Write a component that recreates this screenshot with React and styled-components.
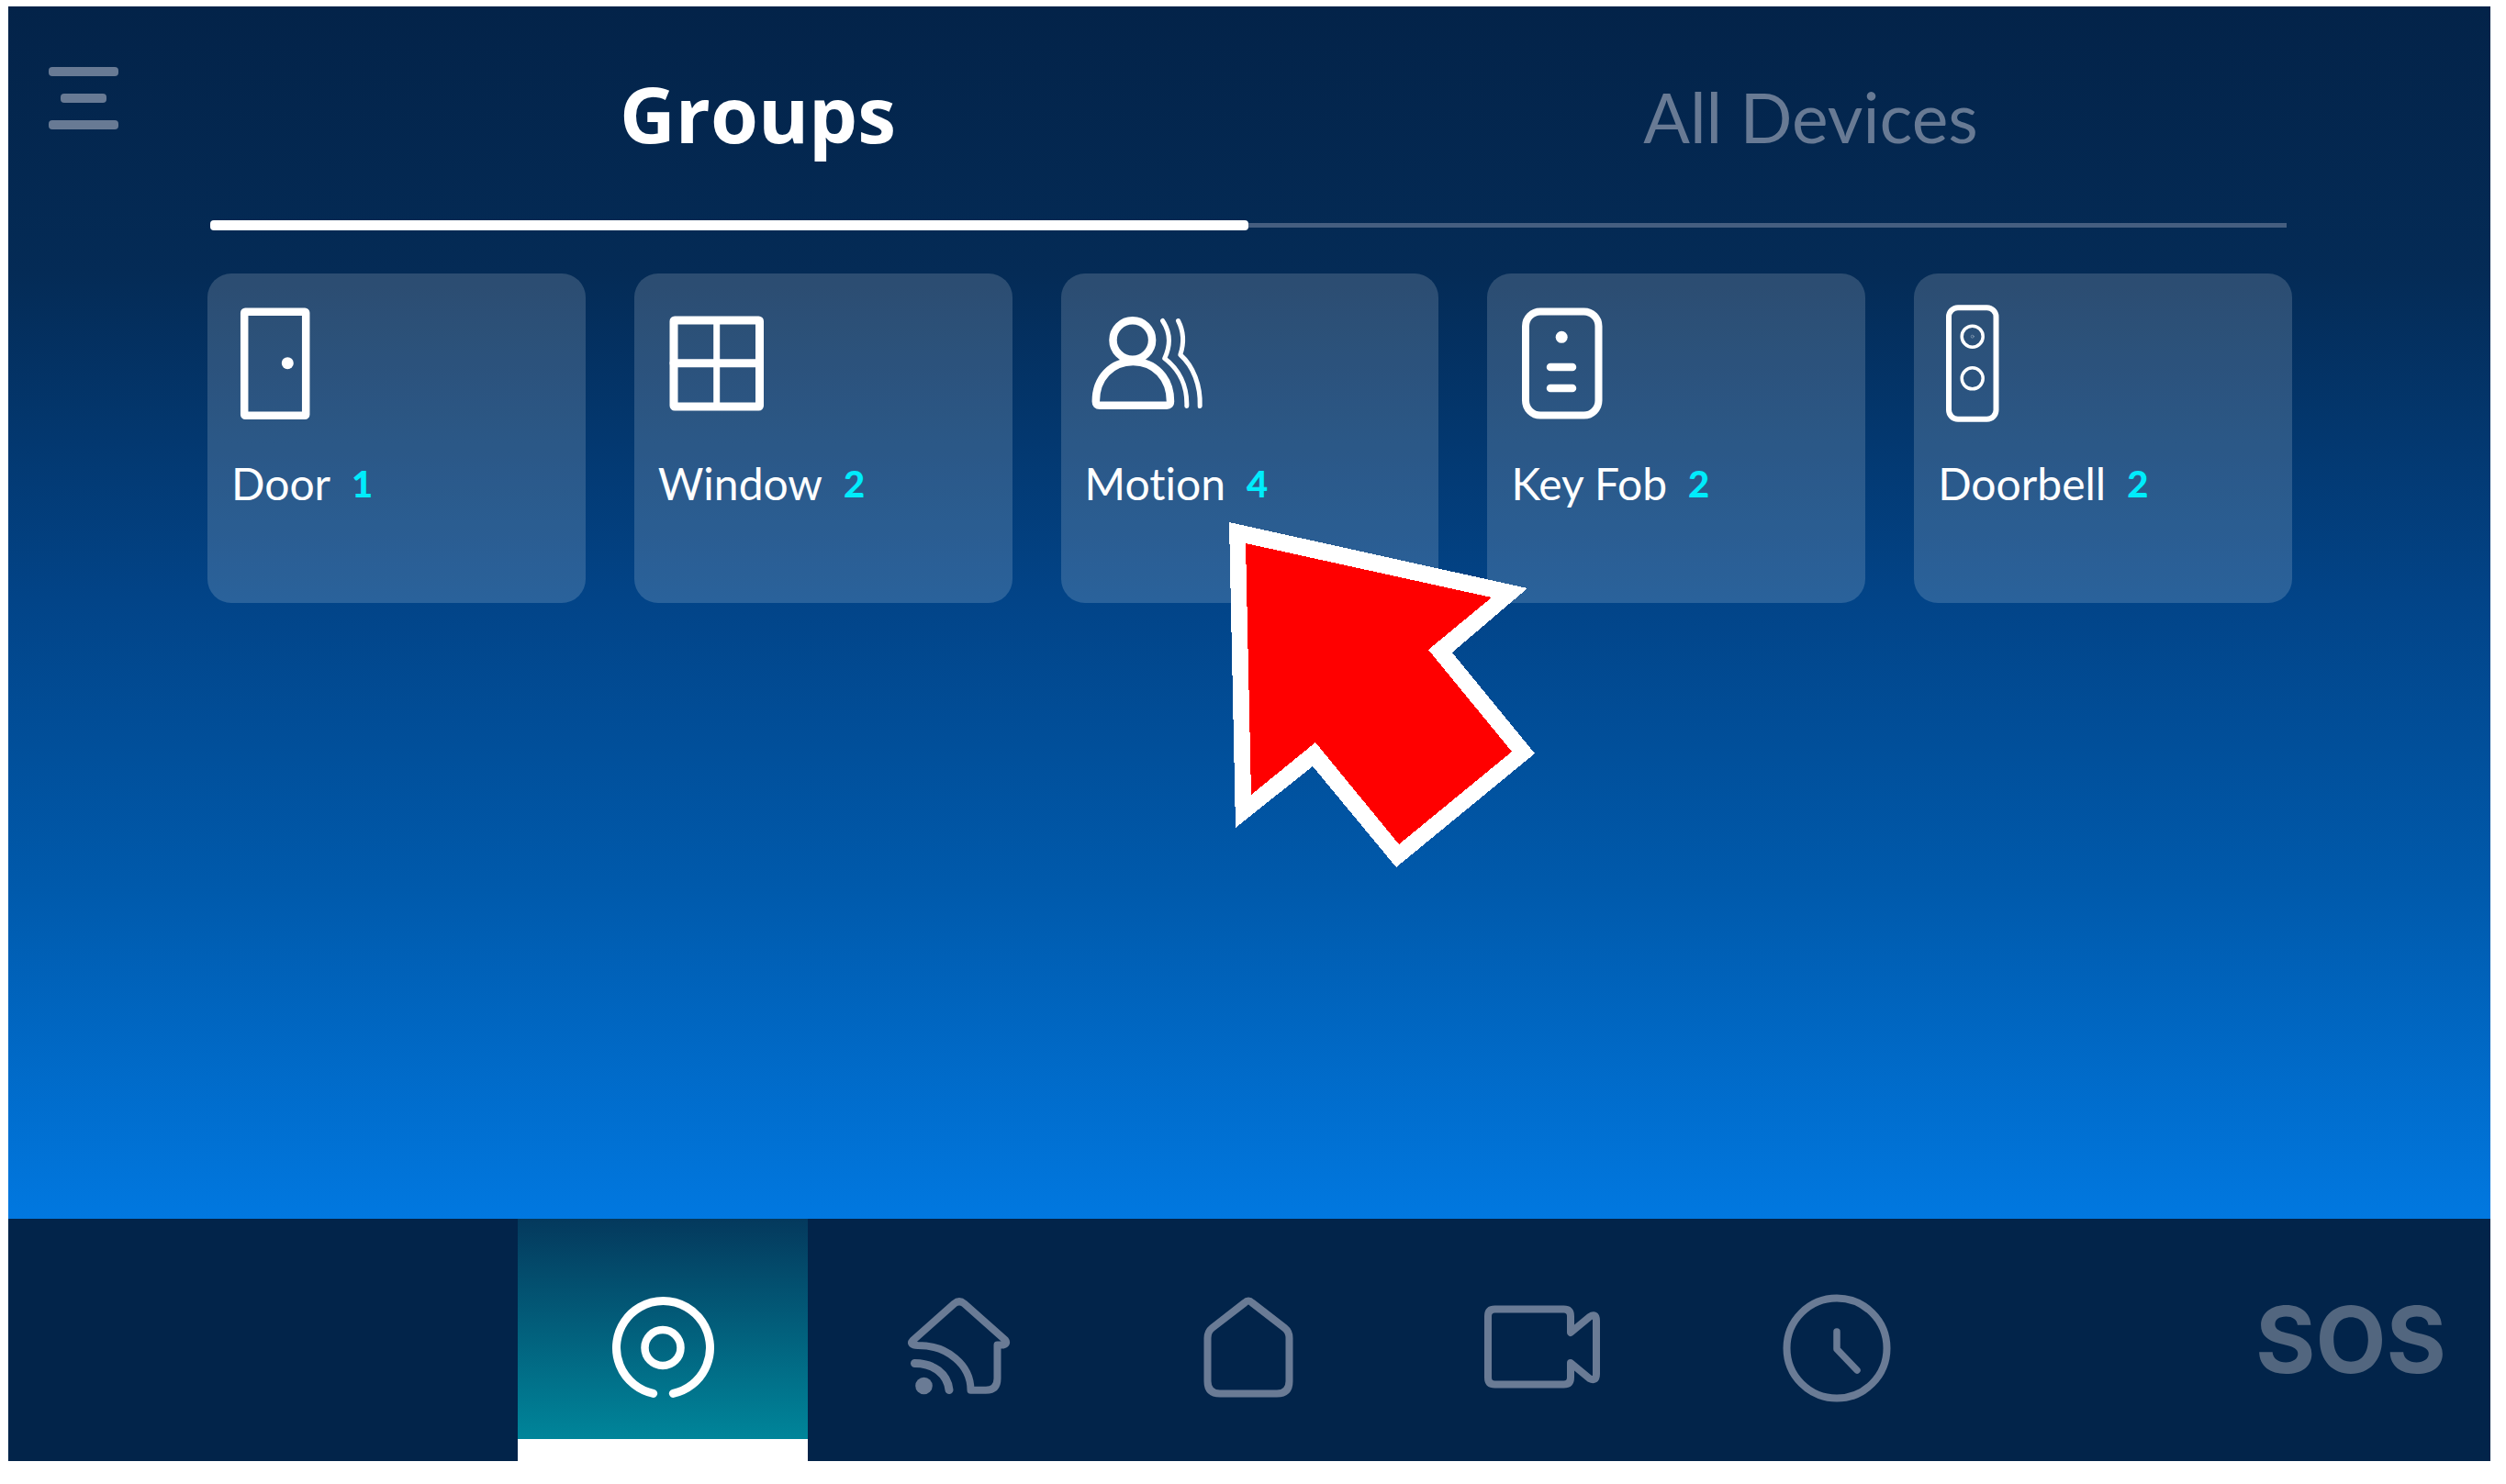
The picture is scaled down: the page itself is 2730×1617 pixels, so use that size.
/* eslint-disable react/prop-types */

import {useState} from "react";
import styled, {createGlobalStyle} from "styled-components";

const GlobalStyle = createGlobalStyle`
  *,
  *::before,
  *::after {
    box-sizing: border-box;
  }

  body {
    margin: 0;
    background: #fff;
    font-family: Lato, "Open Sans", sans-serif;
    font-variant-ligatures: none;
  }

  button {
    padding: 0;
    border: none;
    background: none;
    color: inherit;
    font: inherit;
    font-variant-ligatures: inherit;
    cursor: pointer;
  }

  svg {
    display: block;
    fill: none;
    stroke: currentColor;
    stroke-linecap: round;
    stroke-linejoin: round;
  }
`;

const Page = styled.div`
  display: flex;
  min-height: 100vh;
  padding: 7px 17px 25px 9px;
`;

const Panel = styled.div`
  flex: 1;
  display: flex;
  flex-direction: column;
`;

const Main = styled.main`
  flex: 1;
  display: grid;
  grid-template-columns: 217px 1fr 216px;
  background: linear-gradient(
    #032349 0%,
    #042b56 22%,
    #024488 49%,
    #005aac 73%,
    #0178e0 100%
  );
`;

const MenuButton = styled.button`
  align-self: start;
  justify-self: start;
  display: flex;
  flex-direction: column;
  align-items: center;
  gap: 19px;
  margin: 66px 0 0 44px;
`;

const MenuLine = styled.span`
  width: ${({$short}) => ($short ? 50 : 76)}px;
  height: 10px;
  border-radius: 4px;
  background: #687a94;
`;

const Tabs = styled.div`
  display: grid;
  grid-template-columns: 1fr 1fr;
  height: 244px;
  padding: 0 6px 0 3px;
`;

const Tab = styled.button`
  display: flex;
  flex-direction: column;
  justify-content: space-between;
  padding-top: 66px;
  color: ${({$active}) => ($active ? "#fff" : "#687a94")};

  &::after {
    content: "";
    width: 100%;
    height: ${({$active}) => ($active ? 11 : 5)}px;
    margin: ${({$active}) => ($active ? 0 : 3)}px 0;
    border-radius: ${({$active}) => ($active ? 4 : 0)}px;
    background: ${({$active}) => ($active ? "#fff" : "#455e80")};
  }
`;

const TabLabel = styled.span`
  width: 100%;
  padding-left: ${({$active}) => ($active ? 62 : 94)}px;
  font-size: 86px;
  line-height: 100px;
  text-align: center;
`;

const TabText = styled.span`
  font-family: ${({$active}) => ($active ? '"Open Sans", sans-serif' : "inherit")};
  font-size: ${({$active}) => ($active ? 84 : 75)}px;
  font-weight: ${({$active}) => ($active ? 700 : 400)};
  line-height: 1;
`;

const Groups = styled.ul`
  display: grid;
  grid-template-columns: repeat(5, 1fr);
  gap: 53px;
  margin: 47px 0;
  padding: 0;
  list-style: none;
`;

const GroupItem = styled.li`
  position: relative;
`;

const Card = styled.button`
  display: flex;
  flex-direction: column;
  align-items: flex-start;
  gap: 37px;
  width: 100%;
  min-height: 359px;
  padding: 34px 26px;
  border-radius: 26px;
  background: rgba(255, 255, 255, 0.16);
  color: #fff;
`;

const CardIcon = styled.svg`
  width: 128px;
  height: 128px;
  margin-left: 4px;
`;

const CardLabel = styled.span`
  display: flex;
  align-items: center;
  gap: 23px;
  font-size: 48px;
  line-height: 60px;
`;

const Count = styled.span`
  color: #00ecfc;
  font-size: 40px;
  font-weight: 900;
`;

// sits on top of the neighbouring card as well
const Pointer = styled.svg`
  position: absolute;
  z-index: 1;
  top: 271px;
  left: 183px;
  width: 334px;
  height: 376px;
  stroke: none;
  pointer-events: none;
`;

const NavBar = styled.nav`
  display: grid;
  grid-template-columns: 1fr 59% 1fr;
  height: 264px;
  padding-left: 1px;
  background: #02244a;
`;

const NavItems = styled.div`
  grid-column: 2;
  display: grid;
  grid-template-columns: repeat(5, 1fr);
  gap: 4px;
`;

const NavItem = styled.button`
  display: grid;
  place-items: center;
  padding-top: ${({$active}) => ($active ? 40 : 16)}px;
  border-bottom: ${({$active}) => ($active ? "24px solid #fff" : "none")};
  background: ${({$active}) => $active ? "linear-gradient(#04395d, #00859a) padding-box" : "none"};
  color: ${({$active}) => ($active ? "#fff" : "#6a7b95")};

  svg {
    width: 128px;
    height: 128px;
  }
`;

const Sos = styled.button`
  justify-self: end;
  align-self: center;
  margin-right: 48px;
  color: #52667f;
  font-family: Inter, sans-serif;
  font-size: 100px;
  font-weight: 700;
  line-height: 120px;
`;

const icons = {
    door: (
        <>
            <rect x="10.2" y="7.7" width="67" height="113" rx="1" strokeWidth="8.5"/>
            <circle cx="57.3" cy="63.7" r="6.5" fill="currentColor" stroke="none"/>
        </>
    ),
    window: (
        <>
            <rect x="13" y="17" width="93.5" height="94" rx="1" strokeWidth="9"/>
            <path d="M59.7 17V111" strokeWidth="7"/>
            <path d="M13 63.7H106.5" strokeWidth="9"/>
        </>
    ),
    motion: (
        <>
            <circle cx="47.8" cy="38.5" r="21.3" strokeWidth="8.5"/>
            <path
                d="M7.8 105.5C7.8 80 25 62 48.4 62S89 80 89 105.5Q89 109.7 85 109.7H12Q7.8 109.7 7.8 105.5Z"
                strokeWidth="8.5"/>
            <path d="M80.5 17.5C89 30 89.5 44 82.7 58.5C98 70 107.5 88 106.8 110.5" strokeWidth="5"/>
            <path d="M97.5 17.5C104 30 104 42 99.8 54.5C114 67 122 88 121.2 110.5" strokeWidth="5"/>
        </>
    ),
    keyFob: (
        <>
            <rect x="12" y="7.5" width="79.5" height="113" rx="16" strokeWidth="8"/>
            <circle cx="51.2" cy="35.3" r="6.5" fill="currentColor" stroke="none"/>
            <path d="M39 68H63M39 91H63" strokeWidth="8.5"/>
        </>
    ),
    doorbell: (
        <>
            <rect x="8" y="3.3" width="51.5" height="121.5" rx="10" strokeWidth="6"/>
            <circle cx="33.7" cy="34.7" r="11.5" strokeWidth="3.5"/>
            <circle cx="33.7" cy="34.7" r="1.5" strokeWidth="1" opacity="0.3"/>
            <circle cx="33.7" cy="80.3" r="11.5" strokeWidth="3.5"/>
        </>
    ),
};

const groups = [
    {name: "Door", count: 1, icon: "door"},
    {name: "Window", count: 2, icon: "window"},
    {name: "Motion", count: 4, icon: "motion"},
    {name: "Key Fob", count: 2, icon: "keyFob"},
    {name: "Doorbell", count: 2, icon: "doorbell"},
];

const navItems = [
    {
        label: "Devices",
        drawing: (
            <>
                <path d="M53.7 114.4A51 51 0 1 1 75.3 114.4" strokeWidth="9"/>
                <circle cx="64" cy="64.5" r="19.5" strokeWidth="8.5"/>
            </>
        ),
    },
    {
        label: "Automation",
        drawing: (
            <g transform="translate(2 1)">
                <path
                    d="M14.5 55.5L59.5 15.5Q65 11 70.5 15.5L115 55Q118 59 113 60.5H106.5V97Q106.5 109.7 94 109.7H77.5C77.5 82 52 61 20 61Q10 60.5 14.5 55.5Z"
                    strokeWidth="8"/>
                <path d="M16.5 80.5C37 80.5 52 92 54 109.5" strokeWidth="9"/>
                <circle cx="26.5" cy="105" r="9.3" fill="currentColor" stroke="none"/>
            </g>
        ),
    },
    {
        label: "Home",
        drawing: (
            <path
                d="M59 15.5Q63 11.5 67 15.5L102.5 43Q107.5 47 107.5 54V101Q107.5 114.5 94 114.5H32Q18.5 114.5 18.5 101V54Q18.5 47 23.5 43Z"
                strokeWidth="8"/>
        ),
    },
    {
        label: "Cameras",
        drawing: (
            <path
                d="M94 48V30Q94 22.5 86.5 22.5H11.5Q4 22.5 4 30V97Q4 104.5 11.5 104.5H86.5Q94 104.5 94 97V81L114.5 98Q122 102 122 93V35Q122 26 114.5 31Z"
                strokeWidth="8"/>
        ),
    },
    {
        label: "History",
        drawing: (
            <>
                <circle cx="64" cy="65" r="54.5" strokeWidth="8"/>
                <path d="M64 47V66L86 89" strokeWidth="7.5"/>
            </>
        ),
    },
];

function GroupCard({group, children}) {
    const {name, count, icon} = group;

    return (
        <GroupItem>
            <Card type="button">
                <CardIcon viewBox="0 0 128 128" aria-hidden="true">{icons[icon]}</CardIcon>
                <CardLabel>
                    {name}
                    <Count>{count}</Count>
                </CardLabel>
            </Card>
            {children}
        </GroupItem>
    );
}

function App() {
    const [tab, setTab] = useState("Groups");
    const [page, setPage] = useState("Devices");

    return (
        <>
            <GlobalStyle/>
            <Page>
                <Panel>
                    <Main>
                        <MenuButton type="button" aria-label="Menu">
                            <MenuLine/>
                            <MenuLine $short/>
                            <MenuLine/>
                        </MenuButton>
                        <div>
                            <Tabs role="tablist">
                                {["Groups", "All Devices"].map((name) => (
                                    <Tab
                                        key={name}
                                        type="button"
                                        role="tab"
                                        aria-selected={tab === name}
                                        $active={tab === name}
                                        onClick={() => setTab(name)}>
                                        <TabLabel $active={tab === name}>
                                            <TabText $active={tab === name}>{name}</TabText>
                                        </TabLabel>
                                    </Tab>
                                ))}
                            </Tabs>
                            <Groups>
                                {groups.map((group) => (
                                    <GroupCard key={group.name} group={group}>
                                        {group.name === "Motion" && (
                                            <Pointer viewBox="0 0 334 376" shapeRendering="crispEdges" aria-hidden="true">
                                                <polygon
                                                    fill="#fff"
                                                    points="0,0 325,72 243,142 333,252 182,376 91,266 7,333"/>
                                                <polygon
                                                    fill="#f00"
                                                    points="18,23 286,82 217,139 308,250 185,351 94,240 24,297"/>
                                            </Pointer>
                                        )}
                                    </GroupCard>
                                ))}
                            </Groups>
                        </div>
                    </Main>
                    <NavBar>
                        <NavItems>
                            {navItems.map(({label, drawing}) => (
                                <NavItem
                                    key={label}
                                    type="button"
                                    aria-label={label}
                                    $active={page === label}
                                    onClick={() => setPage(label)}>
                                    <svg viewBox="0 0 128 128" aria-hidden="true">{drawing}</svg>
                                </NavItem>
                            ))}
                        </NavItems>
                        <Sos type="button">SOS</Sos>
                    </NavBar>
                </Panel>
            </Page>
        </>
    );
}

export default App;
